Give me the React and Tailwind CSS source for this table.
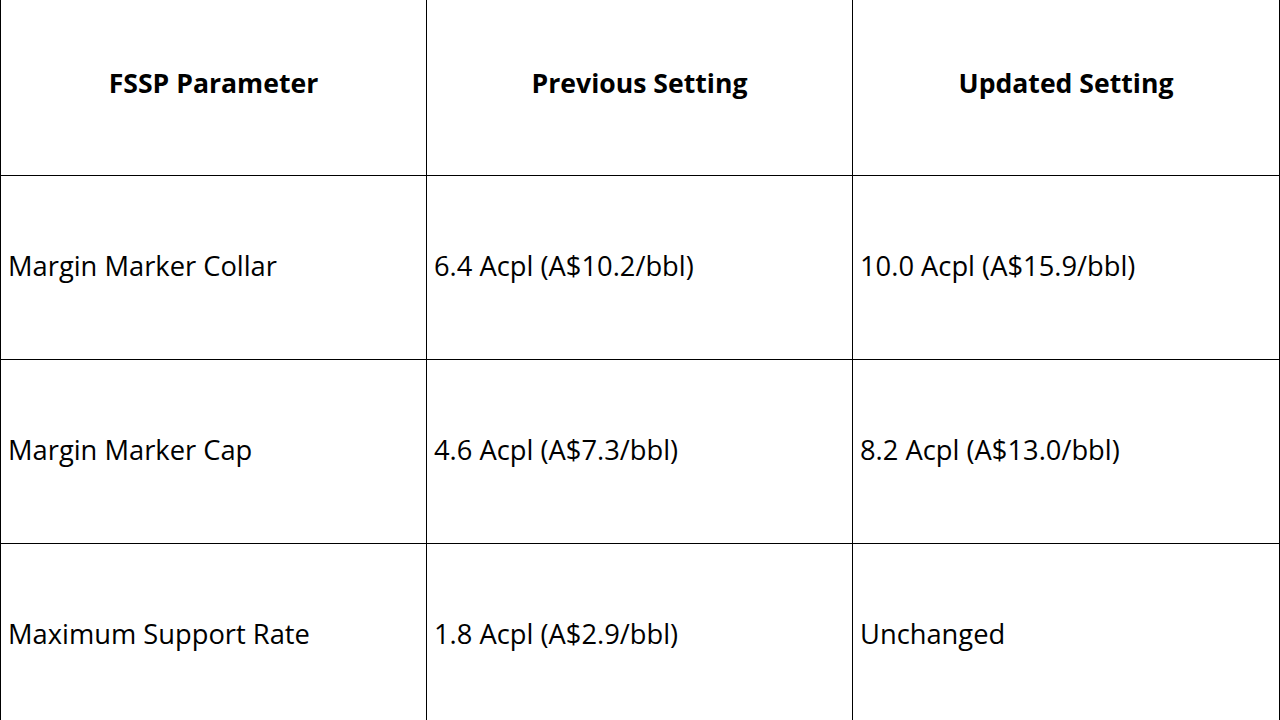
import React from "react";

const rows = [
  ["Margin Marker Collar", "6.4 Acpl (A$10.2/bbl)", "10.0 Acpl (A$15.9/bbl)"],
  ["Margin Marker Cap", "4.6 Acpl (A$7.3/bbl)", "8.2 Acpl (A$13.0/bbl)"],
  ["Maximum Support Rate", "1.8 Acpl (A$2.9/bbl)", "Unchanged"],
];

export default function App() {
  return (
    <div className="w-[1280px] h-[720px] overflow-hidden bg-white text-black" style={{ fontFamily: '"Open Sans", "Noto Sans", sans-serif' }}>
      <div className="-mt-[9px] grid grid-cols-3 border-l border-r border-t border-black">
        {["FSSP Parameter", "Previous Setting", "Updated Setting"].map((h, i) => (
          <div
            key={h}
            className={`h-[184px] flex items-center justify-center border-b border-black text-[26.6px] font-bold ${i < 2 ? "border-r" : ""}`}
          >
            {h}
          </div>
        ))}
        {rows.map((r) =>
          r.map((c, i) => (
            <div
              key={r[0] + i}
              className={`h-[184px] flex items-center pl-[7px] pb-[3px] border-b border-black text-[27.3px] ${i < 2 ? "border-r" : ""}`}
            >
              {c}
            </div>
          ))
        )}
      </div>
    </div>
  );
}
